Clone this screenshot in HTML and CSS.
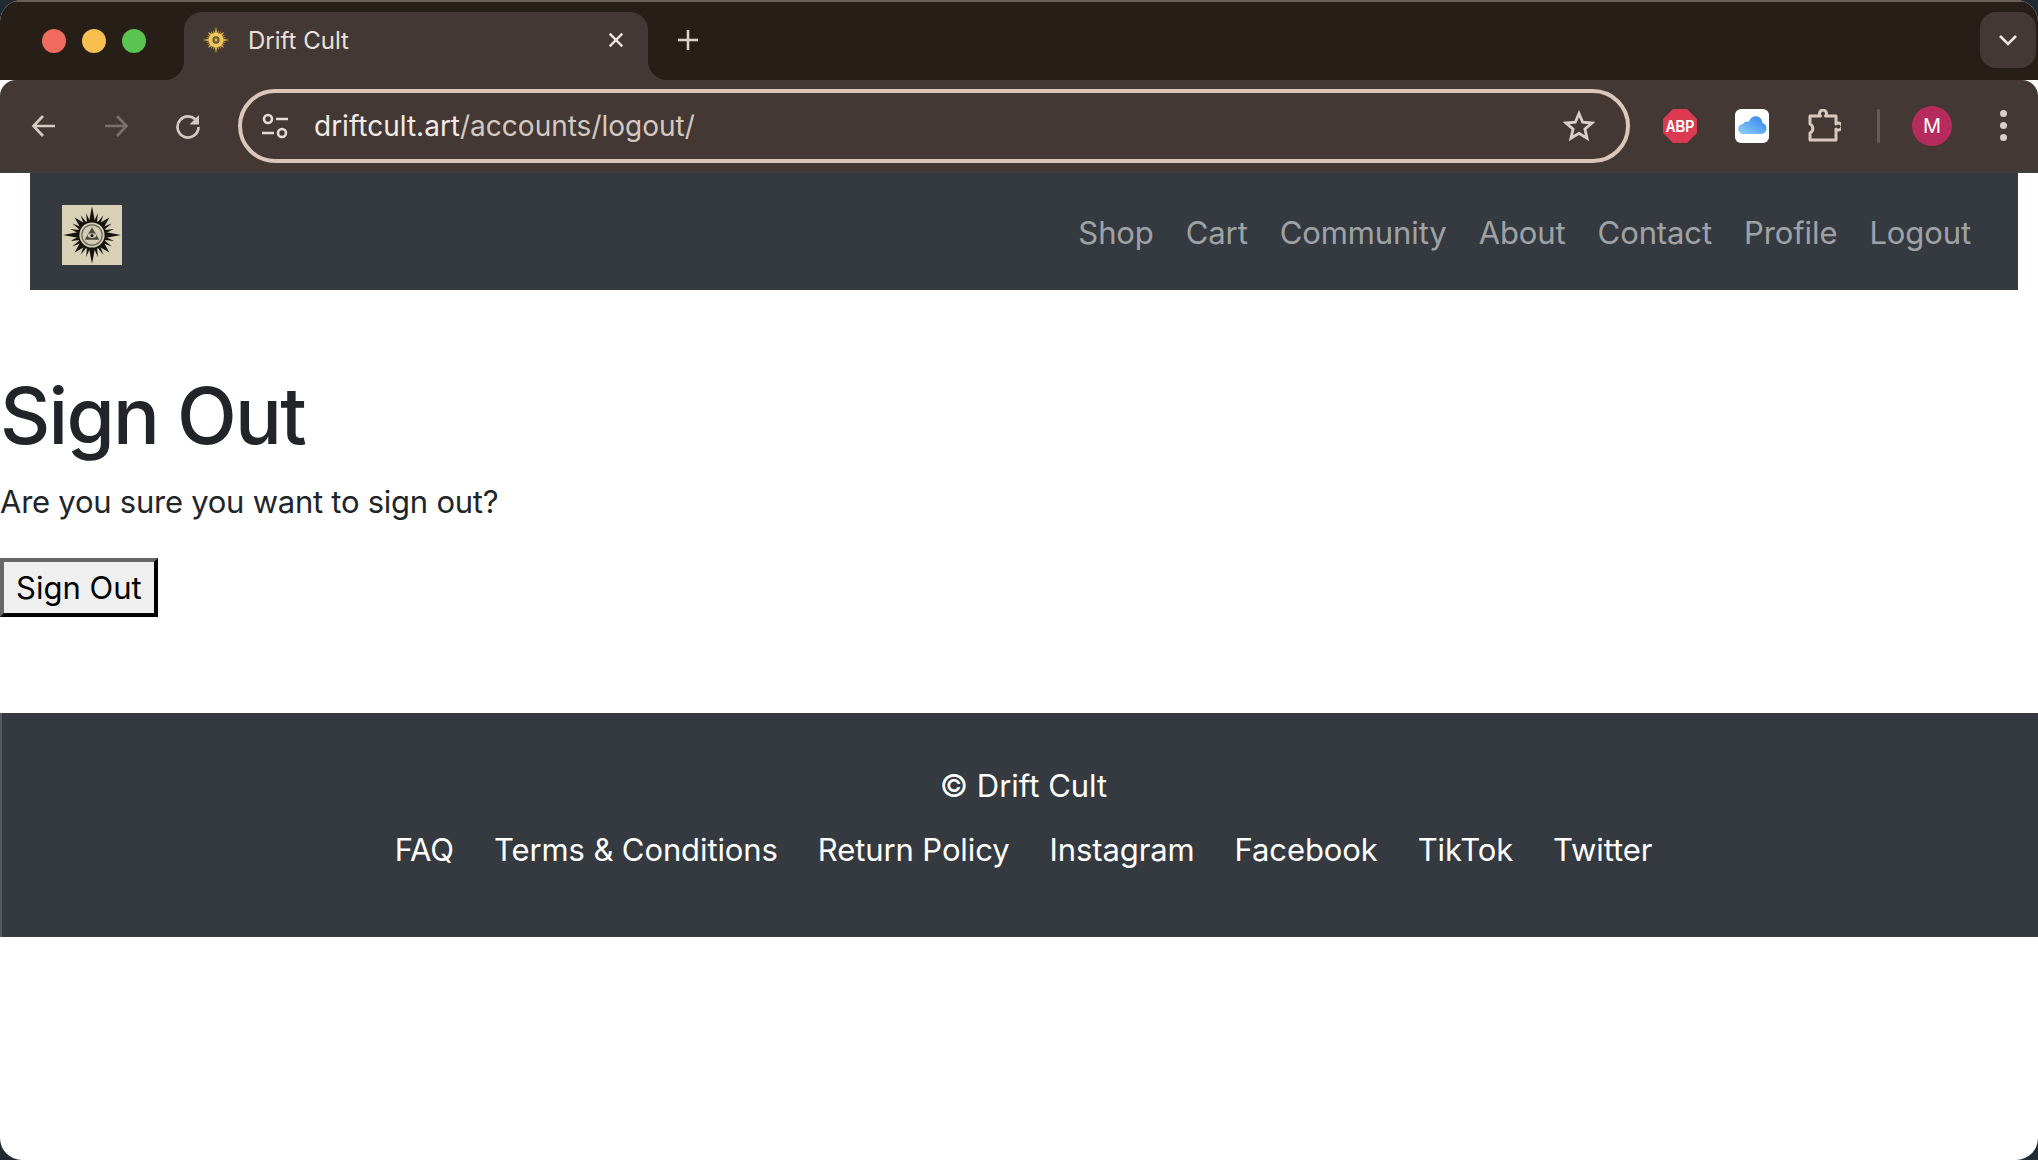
FILE: index.html
```html
<!DOCTYPE html>
<html lang="en">
<head>
	<meta charset="UTF-8"/>
	<title>Drift Cult</title>
	<link rel="stylesheet" href="styles.css">
</head>
<body>
	<svg class="defs" width="0" height="0">
		<defs>
			<g id="ray-set">
				<polygon points="50,2 55,28 45,28"/>
				<polygon points="50,2 55,28 45,28" transform="rotate(90 50 50)"/>
				<polygon points="50,2 55,28 45,28" transform="rotate(180 50 50)"/>
				<polygon points="50,2 55,28 45,28" transform="rotate(270 50 50)"/>
				<polygon points="50,9 56,30 44,30" transform="rotate(45 50 50)"/>
				<polygon points="50,9 56,30 44,30" transform="rotate(135 50 50)"/>
				<polygon points="50,9 56,30 44,30" transform="rotate(225 50 50)"/>
				<polygon points="50,9 56,30 44,30" transform="rotate(315 50 50)"/>
				<polygon points="50,12 53,30 47,30" transform="rotate(15 50 50)"/>
				<polygon points="50,12 53,30 47,30" transform="rotate(30 50 50)"/>
				<polygon points="50,12 53,30 47,30" transform="rotate(60 50 50)"/>
				<polygon points="50,12 53,30 47,30" transform="rotate(75 50 50)"/>
				<polygon points="50,12 53,30 47,30" transform="rotate(105 50 50)"/>
				<polygon points="50,12 53,30 47,30" transform="rotate(120 50 50)"/>
				<polygon points="50,12 53,30 47,30" transform="rotate(150 50 50)"/>
				<polygon points="50,12 53,30 47,30" transform="rotate(165 50 50)"/>
				<polygon points="50,12 53,30 47,30" transform="rotate(195 50 50)"/>
				<polygon points="50,12 53,30 47,30" transform="rotate(210 50 50)"/>
				<polygon points="50,12 53,30 47,30" transform="rotate(240 50 50)"/>
				<polygon points="50,12 53,30 47,30" transform="rotate(255 50 50)"/>
				<polygon points="50,12 53,30 47,30" transform="rotate(285 50 50)"/>
				<polygon points="50,12 53,30 47,30" transform="rotate(300 50 50)"/>
				<polygon points="50,12 53,30 47,30" transform="rotate(330 50 50)"/>
				<polygon points="50,12 53,30 47,30" transform="rotate(345 50 50)"/>
			</g>
		</defs>
	</svg>

	<div class="window">
		<div class="tabstrip">
			<div class="lights">
				<span class="light red"></span>
				<span class="light yellow"></span>
				<span class="light green"></span>
			</div>
			<div class="tab">
				<svg class="favicon" viewBox="0 0 100 100">
					<use href="#ray-set" fill="#d9b24c"/>
					<circle cx="50" cy="50" r="26" fill="#f0c75a"/>
					<circle cx="50" cy="50" r="13" fill="#6b5a30"/>
					<circle cx="50" cy="50" r="5" fill="#f0c75a"/>
				</svg>
				<span class="tab-title">Drift Cult</span>
				<svg class="tab-close" viewBox="0 0 20 20"><path d="M3 3l14 14M17 3L3 17"/></svg>
			</div>
			<svg class="new-tab" viewBox="0 0 24 24"><path d="M12 2v20M2 12h20"/></svg>
			<div class="tab-search">
				<svg viewBox="0 0 20 12"><path d="M2 2l8 8 8-8"/></svg>
			</div>
		</div>

		<div class="toolbar">
			<div class="tool-btn">
				<svg class="line-icon" viewBox="0 0 28 28"><path d="M25 14H4M13 4L3.500 14 13 24"/></svg>
			</div>
			<div class="tool-btn dim">
				<svg class="line-icon" viewBox="0 0 28 28"><path d="M3 14h21M15 4l9.500 10L15 24"/></svg>
			</div>
			<div class="tool-btn">
				<svg class="line-icon" viewBox="0 0 28 28"><path d="M23.500 10.500A10.500 10.500 0 1 0 24.500 15"/><path class="solid" d="M25 3v9.500h-9.500z"/></svg>
			</div>
			<div class="omnibox">
				<svg class="tune" viewBox="0 0 28 28">
					<circle cx="7" cy="7" r="4"/>
					<path d="M15 7h12M1 21h12"/>
					<circle cx="21" cy="21" r="4"/>
				</svg>
				<div class="url"><span class="host">driftcult.art</span>/accounts/logout/</div>
				<svg class="star" viewBox="0 0 32 32"><path d="M16 3.500l3.700 8.700 9.300.8-7.100 6.100 2.200 9.200L16 23.400 7.900 28.300l2.200-9.200L3 13l9.300-.8z"/></svg>
			</div>
			<div class="ext-btn first">
				<svg class="abp" viewBox="0 0 34 34">
					<polygon points="10,0 24,0 34,10 34,24 24,34 10,34 0,24 0,10" fill="#dc3a50"/>
					<text text-anchor="middle" transform="translate(17 23) scale(.8 1)">ABP</text>
				</svg>
			</div>
			<div class="ext-btn">
				<svg class="cloud" viewBox="0 0 34 34">
					<defs>
						<linearGradient id="cloud-fill" x1="0" y1="1" x2="1" y2="0">
							<stop offset="0" stop-color="#8fd0f7"/>
							<stop offset="1" stop-color="#2f80ee"/>
						</linearGradient>
					</defs>
					<rect width="34" height="34" rx="6" fill="#fff"/>
					<path d="M8.500 25C5.500 25 3.200 22.800 3.200 20c0-2.600 2-4.700 4.600-4.900C9.300 12.800 11.500 12 13.700 13c1.300-4 4-5.800 7-5.800 3.700 0 6.400 2.800 6.800 6.700 2.300.5 4 2.700 4 5.400 0 3.200-2.300 5.700-5.300 5.700z" fill="url(#cloud-fill)"/>
				</svg>
			</div>
			<div class="ext-btn">
				<svg class="puzzle" viewBox="0 0 34 34"><path d="M3 7H13.500a3.500 3.500 0 1 1 5 0H29V15a3.500 3.500 0 1 1 0 5V31H3V24a5 5 0 0 0 0-9z"/></svg>
			</div>
			<span class="divider"></span>
			<div class="avatar">M</div>
			<div class="menu-dots"><span></span><span></span><span></span></div>
		</div>

		<div class="page">
			<nav class="navbar">
				<a class="brand" href="#">
					<svg class="logo" viewBox="0 0 100 100">
						<rect width="100" height="100" fill="#d9d1b5"/>
						<use href="#ray-set" fill="#15130f"/>
						<circle cx="50" cy="50" r="24" fill="#15130f"/>
						<circle cx="50" cy="50" r="21" fill="#d2cbb1"/>
						<circle cx="50" cy="50" r="17" fill="none" stroke="#6a675e" stroke-width="2"/>
						<polygon points="50,37 62,58 38,58" fill="#4a473f"/>
						<ellipse cx="50" cy="51" rx="7" ry="4" fill="#d2cbb1"/>
						<circle cx="50" cy="51" r="2.500" fill="#111"/>
					</svg>
				</a>
				<ul class="nav-links">
					<li><a href="#">Shop</a></li>
					<li><a href="#">Cart</a></li>
					<li><a href="#">Community</a></li>
					<li><a href="#">About</a></li>
					<li><a href="#">Contact</a></li>
					<li><a href="#">Profile</a></li>
					<li><a href="#">Logout</a></li>
				</ul>
			</nav>

			<main class="content">
				<h1>Sign Out</h1>
				<p>Are you sure you want to sign out?</p>
				<button type="button" class="sign-out">Sign Out</button>
			</main>

			<footer class="footer">
				<p class="copy">© Drift Cult</p>
				<ul class="footer-links">
					<li><a href="#">FAQ</a></li>
					<li><a href="#">Terms &amp; Conditions</a></li>
					<li><a href="#">Return Policy</a></li>
					<li><a href="#">Instagram</a></li>
					<li><a href="#">Facebook</a></li>
					<li><a href="#">TikTok</a></li>
					<li><a href="#">Twitter</a></li>
				</ul>
			</footer>
		</div>
	</div>
</body>
</html>
```

FILE: styles.css
```css
* {
	margin: 0;
	padding: 0;
	box-sizing: border-box;
}

html, body {
	width: 2038px;
	height: 1160px;
	overflow: hidden;
}

body {
	background-color: #1f2a33;
	font-family: Inter, "Liberation Sans", sans-serif;
}

a {
	text-decoration: none;
}

ul {
	list-style: none;
}

.defs {
	position: absolute;
}

.window {
	display: flex;
	flex-direction: column;
	height: 1160px;
	overflow: hidden;
	background-color: #fff;
	border-radius: 22px;
}

/* browser chrome */
.tabstrip {
	display: flex;
	align-items: flex-end;
	height: 80px;
	border-top: 2px solid #6b635c;
	background-color: #281e18;
}

.lights {
	display: flex;
	gap: 16px;
	align-self: center;
	width: 184px;
	padding-left: 42px;
}
.light {
	width: 24px;
	height: 24px;
	border-radius: 50%;
}
.red { background-color: #f16a5e; }
.yellow { background-color: #f6bf4f; }
.green { background-color: #5ac451; }

.tab {
	position: relative;
	display: flex;
	align-items: center;
	width: 464px;
	height: 68px;
	padding: 0 23px 12px 18px;
	background-color: #433833;
	border-radius: 18px 18px 0 0;
}
.tab::before,
.tab::after {
	content: "";
	position: absolute;
	bottom: 0;
	width: 20px;
	height: 20px;
	background-color: #433833;
}
.tab::before {
	left: -20px;
	-webkit-mask: radial-gradient(circle at 0 0, transparent 20px, #000 20.500px);
}
.tab::after {
	right: -20px;
	-webkit-mask: radial-gradient(circle at 100% 0, transparent 20px, #000 20.500px);
}
.favicon {
	width: 28px;
	height: 28px;
	margin-right: 18px;
}
.tab-title {
	flex: 1;
	color: #e9e1dc;
	font-size: 24px;
}
.tab-close {
	width: 18px;
	height: 18px;
	fill: none;
	stroke: #efe7e2;
	stroke-width: 2.600;
}
.new-tab {
	align-self: center;
	width: 24px;
	height: 24px;
	margin: 0 0 2px 28px;
	fill: none;
	stroke: #dcd2cc;
	stroke-width: 2.600;
}
.tab-search {
	display: flex;
	align-items: center;
	justify-content: center;
	align-self: center;
	width: 56px;
	height: 56px;
	margin: 0 2px 2px auto;
	background-color: #433833;
	border-radius: 16px;
}
.tab-search svg {
	width: 20px;
	height: 12px;
	fill: none;
	stroke: #efe7e2;
	stroke-width: 2.600;
}

.toolbar {
	display: flex;
	align-items: center;
	flex-shrink: 0;
	height: 93px;
	padding-left: 8px;
	background-color: #433833;
	border-bottom: 2px solid #3f3f3f;
	border-radius: 16px 16px 0 0;
}
.tool-btn {
	display: flex;
	align-items: center;
	justify-content: center;
	width: 72px;
}
.line-icon {
	width: 28px;
	height: 28px;
	fill: none;
	stroke: #d5c9c2;
	stroke-width: 2.700;
}
.line-icon .solid {
	fill: #d5c9c2;
	stroke: none;
}
.dim .line-icon {
	stroke: #7c6f69;
}

.omnibox {
	display: flex;
	align-items: center;
	width: 1392px;
	height: 74px;
	margin-left: 14px;
	padding: 0 31px 0 19px;
	border: 4px solid #dcc6b9;
	border-radius: 37px;
}
.tune {
	width: 28px;
	height: 28px;
	fill: none;
	stroke: #e6dcd6;
	stroke-width: 2.600;
}
.url {
	flex: 1;
	margin-left: 25px;
	color: #d4c9c2;
	font-size: 28px;
}
.host {
	color: #f3ebe6;
}
.star {
	width: 32px;
	height: 32px;
	fill: none;
	stroke: #d9cfc9;
	stroke-width: 2.800;
}

.ext-btn {
	display: flex;
	align-items: center;
	justify-content: center;
	width: 72px;
}
.ext-btn.first {
	margin-left: 14px;
}
.abp, .cloud, .puzzle {
	width: 34px;
	height: 34px;
}
.abp text {
	fill: #fff;
	font-family: "Liberation Sans", sans-serif;
	font-size: 17px;
	font-weight: 700;
}
.puzzle {
	fill: none;
	stroke: #d9c9bf;
	stroke-width: 3;
	stroke-linejoin: round;
}
.divider {
	width: 3px;
	height: 34px;
	margin-left: 17px;
	background-color: #6b5c53;
	border-radius: 2px;
}
.avatar {
	display: flex;
	align-items: center;
	justify-content: center;
	width: 40px;
	height: 40px;
	margin-left: 32px;
	color: #fff;
	font-size: 20px;
	background-color: #b52b5b;
	border-radius: 50%;
}
.menu-dots {
	display: flex;
	flex-direction: column;
	gap: 5px;
	margin-left: 48px;
}
.menu-dots span {
	width: 7px;
	height: 7px;
	background-color: #d9cfc9;
	border-radius: 50%;
}

/* site */
.navbar {
	display: flex;
	align-items: center;
	justify-content: space-between;
	height: 117px;
	margin: 0 20px 0 30px;
	padding: 2px 47px 0 32px;
	background-color: #343a40;
}
.brand {
	display: flex;
	margin-top: 4px;
}
.logo {
	width: 60px;
	height: 60px;
}
.nav-links {
	display: flex;
	gap: 32px;
}
.nav-links a {
	color: rgba(255, 255, 255, .55);
	font-size: 31px;
	letter-spacing: -.1px;
}

.content {
	height: 423px;
	padding-top: 79px;
}
.content h1 {
	color: #212529;
	font-size: 78px;
	font-weight: 500;
	line-height: 94px;
	letter-spacing: -1.800px;
}
.content p {
	margin-top: 15px;
	color: #212529;
	font-size: 31px;
	line-height: 47px;
	letter-spacing: -.25px;
}
.sign-out {
	margin-top: 33px;
	height: 59px;
	padding: 0 12px;
	color: #000;
	font-family: inherit;
	font-size: 31px;
	background-color: #efefef;
	border-style: solid;
	border-width: 4px;
	border-color: #666 #000 #000 #666;
}

.footer {
	display: flex;
	flex-direction: column;
	align-items: center;
	height: 224px;
	padding: 49px 0 0 7px;
	color: #fff;
	background-color: #343a40;
	border-left: 2px solid #55595e;
}
.copy {
	font-size: 31px;
	line-height: 47px;
}
.footer-links {
	display: flex;
	gap: 40px;
	margin-top: 17px;
}
.footer-links a {
	color: #fff;
	font-size: 31px;
	line-height: 47px;
	letter-spacing: -.1px;
}
```
